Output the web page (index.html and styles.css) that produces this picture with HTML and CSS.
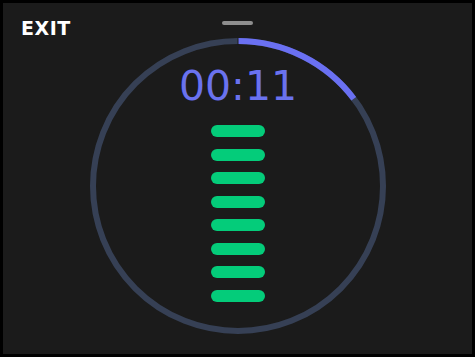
FILE: index.html
```html
<!DOCTYPE html>
<html>
<head>
<meta charset="utf-8">
<link rel="stylesheet" href="styles.css">
</head>
<body>
<div class="app">
  <div class="header">
    <div class="exit">EXIT</div>
    <div class="handle"></div>
    <div></div>
  </div>
  <div class="dial">
    <svg class="ring" width="300" height="300" viewBox="0 0 300 300">
      <circle cx="150" cy="150" r="145" fill="none" stroke="#364055" stroke-width="6"/>
      <circle cx="150" cy="150" r="145" fill="none" stroke="#6a70f2" stroke-width="6"
        stroke-dasharray="134 1000" transform="rotate(-90 150 150)"/>
      <line x1="150" y1="2" x2="150" y2="9" stroke="#1b1b1b" stroke-width="1"/>
    </svg>
    <div class="content">
      <div class="time">00:11</div>
      <div class="bars">
        <div class="bar"></div>
        <div class="bar"></div>
        <div class="bar"></div>
        <div class="bar"></div>
        <div class="bar"></div>
        <div class="bar"></div>
        <div class="bar"></div>
        <div class="bar"></div>
      </div>
    </div>
  </div>
</div>
</body>
</html>
```

FILE: styles.css
```css
html, body {
  margin: 0;
  padding: 0;
  background: #000;
}
.app {
  width: 475px;
  height: 357px;
  box-sizing: border-box;
  border: 3px solid #000;
  background: #1b1b1b;
  display: flex;
  flex-direction: column;
  overflow: hidden;
  font-family: "DejaVu Sans", sans-serif;
}
.header {
  height: 33px;
  flex: none;
  box-sizing: border-box;
  padding: 16px 18px 0;
  display: grid;
  grid-template-columns: 1fr auto 1fr;
  align-items: start;
}
.exit {
  color: #fff;
  font-weight: bold;
  font-size: 19px;
  line-height: 19px;
  letter-spacing: 0.5px;
}
.handle {
  width: 31px;
  height: 4px;
  margin-top: 2px;
  border-radius: 2px;
  background: #8e8e8e;
}
.dial {
  display: grid;
  justify-content: center;
}
.ring, .content {
  grid-area: 1 / 1;
}
.content {
  display: flex;
  flex-direction: column;
  align-items: center;
  padding-top: 30px;
}
.time {
  color: #6a72ef;
  font-size: 41px;
  line-height: 41px;
  margin-left: 1px;
}
.bars {
  margin-top: 18px;
  display: flex;
  flex-direction: column;
  gap: 11.5px;
  margin-left: 1px;
}
.bar {
  width: 54px;
  height: 12px;
  border-radius: 6px;
  background: #04cc7a;
}
```
